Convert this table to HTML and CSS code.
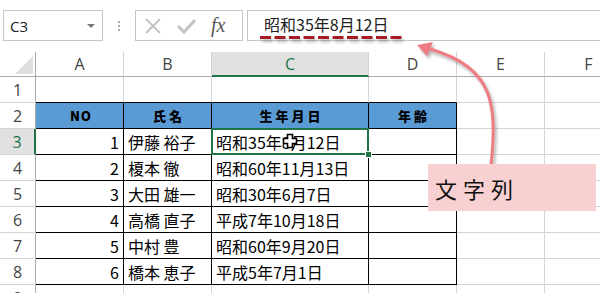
FILE: index.html
```html
<!DOCTYPE html>
<html lang="ja">
<head>
  <meta charset="UTF-8">
  <title>文字列の日付</title>
  <link rel="stylesheet" href="styles.css">
</head>
<body>
  <div class="page">
    <!-- Formula bar -->
    <div class="formula-bar">
      <div class="name-box"><span>C3</span><span class="caret"></span></div>
      <div class="grip"><span></span><span></span><span></span></div>
      <div class="fx-box">
        <svg width="20" height="16" viewBox="0 0 20 16"><path d="M3 1 L17 15 M17 1 L3 15" stroke="#c4c4c4" stroke-width="2" fill="none"/></svg>
        <svg width="20" height="16" viewBox="0 0 20 16"><path d="M2 8 L8 14 L19 2" stroke="#c4c4c4" stroke-width="3" fill="none"/></svg>
        <i class="fx">fx</i>
      </div>
      <div class="formula-input">昭和35年8月12日</div>
    </div>

    <!-- Sheet grid -->
    <div class="sheet">
      <div class="corner"></div>
      <div class="col-head">A</div>
      <div class="col-head">B</div>
      <div class="col-head active">C</div>
      <div class="col-head">D</div>
      <div class="col-head">E</div>
      <div class="col-head">F</div>

      <div class="row-head">1</div>
      <div class="cell above"></div>
      <div class="cell above"></div>
      <div class="cell above"></div>
      <div class="cell above"></div>
      <div class="cell"></div>
      <div class="cell"></div>

      <div class="row-head">2</div>
      <div class="cell th no">NO</div>
      <div class="cell th">氏名</div>
      <div class="cell th">生年月日</div>
      <div class="cell th">年齢</div>
      <div class="cell"></div>
      <div class="cell"></div>

      <div class="row-head active">3</div>
      <div class="cell tb num">1</div>
      <div class="cell tb">伊藤 裕子</div>
      <div class="cell tb sel">昭和35年8月12日
        <svg class="cross" width="16" height="16" viewBox="0 0 16 16"><path d="M5.5 1.5 H10.5 V5.5 H14.5 V10.5 H10.5 V14.5 H5.5 V10.5 H1.5 V5.5 H5.5 Z" fill="#fff" stroke="#000" stroke-width="1.6"/></svg>
      </div>
      <div class="cell tb"></div>
      <div class="cell"></div>
      <div class="cell"></div>

      <div class="row-head">4</div>
      <div class="cell tb num">2</div>
      <div class="cell tb">榎本 徹</div>
      <div class="cell tb">昭和60年11月13日</div>
      <div class="cell tb"></div>
      <div class="cell"></div>
      <div class="cell"></div>

      <div class="row-head">5</div>
      <div class="cell tb num">3</div>
      <div class="cell tb">大田 雄一</div>
      <div class="cell tb">昭和30年6月7日</div>
      <div class="cell tb"></div>
      <div class="cell"></div>
      <div class="cell"></div>

      <div class="row-head">6</div>
      <div class="cell tb num">4</div>
      <div class="cell tb">高橋 直子</div>
      <div class="cell tb">平成7年10月18日</div>
      <div class="cell tb"></div>
      <div class="cell"></div>
      <div class="cell"></div>

      <div class="row-head">7</div>
      <div class="cell tb num">5</div>
      <div class="cell tb">中村 豊</div>
      <div class="cell tb">昭和60年9月20日</div>
      <div class="cell tb"></div>
      <div class="cell"></div>
      <div class="cell"></div>

      <div class="row-head">8</div>
      <div class="cell tb num">6</div>
      <div class="cell tb">橋本 恵子</div>
      <div class="cell tb">平成5年7月1日</div>
      <div class="cell tb"></div>
      <div class="cell"></div>
      <div class="cell"></div>

      <div class="row-head">9</div>
      <div class="cell"></div>
      <div class="cell"></div>
      <div class="cell"></div>
      <div class="cell"></div>
      <div class="cell"></div>
      <div class="cell"></div>
    </div>

    <!-- Annotation: underline + arrow -->
    <svg class="marks" width="600" height="293" viewBox="0 0 600 293">
      <defs>
        <filter id="shade" filterUnits="userSpaceOnUse" x="0" y="0" width="600" height="293">
          <feDropShadow dx="2" dy="3" stdDeviation="1.4" flood-color="#777" flood-opacity="0.55"/>
        </filter>
      </defs>
      <line x1="260" y1="37.5" x2="405" y2="37.5" stroke="#a51d28" stroke-width="3.2" stroke-dasharray="11 3.5" filter="url(#shade)"/>
      <g filter="url(#shade)">
        <path d="M491 166 C497 105 495 68 430 49" stroke="#ef7c82" stroke-width="3" fill="none"/>
        <polygon points="417,45 433,42 427,56" fill="#ef7c82"/>
      </g>
    </svg>
    <div class="callout">文字列</div>
  </div>
</body>
</html>
```

FILE: styles.css
```css
/* Base */
body {
  margin: 0;
  background-color: #fff;
  font-family: "Noto Sans CJK JP", sans-serif;
  color: #000;
  overflow: hidden;
}

.page {
  position: relative;
  width: 600px;
  height: 293px;
  overflow: hidden;
}

/* Formula bar */
.formula-bar {
  display: flex;
  align-items: stretch;
  height: 31px;
  padding: 10px 0 11px 3px;
}

.name-box {
  width: 100px;
  box-sizing: border-box;
  border: 1px solid #c6c6c6;
  display: flex;
  align-items: center;
  justify-content: space-between;
  padding: 0 6px 0 6px;
  font-family: "Open Sans", sans-serif;
  font-size: 15px;
  color: #222;
}

.caret {
  width: 0;
  height: 0;
  border-left: 4px solid transparent;
  border-right: 4px solid transparent;
  border-top: 4px solid #777;
  margin-right: 1px;
}

.grip {
  width: 32px;
  display: flex;
  flex-direction: column;
  align-items: center;
  justify-content: center;
  gap: 2px;
}

.grip span {
  width: 2px;
  height: 2px;
  background-color: #a8a8a8;
}

.fx-box {
  width: 108px;
  box-sizing: border-box;
  border: 1px solid #c6c6c6;
  display: flex;
  align-items: center;
  padding-left: 7px;
  gap: 13px;
}

.fx {
  font-family: "Liberation Serif", serif;
  font-size: 20px;
  color: #555;
  margin-left: 2px;
}

.formula-input {
  flex: 1;
  margin-left: 4px;
  border: 1px solid #c6c6c6;
  border-right: none;
  padding-left: 16px;
  font-size: 16px;
  line-height: 27px;
  color: #222;
}

/* Sheet grid */
.sheet {
  display: grid;
  grid-template-columns: 36px 88px 88px 157px 88px 88px 88px;
  grid-template-rows: 25px repeat(9, 26px);
}

.sheet > div {
  box-sizing: border-box;
  border-right: 1px solid #d4d4d4;
  border-bottom: 1px solid #d4d4d4;
  display: flex;
  align-items: center;
  white-space: nowrap;
}

.corner {
  position: relative;
  border-bottom-color: #ababab !important;
  border-right-color: #ababab !important;
}

.corner::after {
  content: "";
  position: absolute;
  right: 2px;
  bottom: 2px;
  width: 0;
  height: 0;
  border-left: 18px solid transparent;
  border-bottom: 18px solid #dfdfdf;
}

.col-head {
  justify-content: center;
  font-family: "Open Sans", sans-serif;
  font-size: 16px;
  color: #444;
  border-bottom-color: #ababab !important;
}

.col-head.active {
  background-color: #e1e1e1;
  color: #217346;
  border-bottom: 2px solid #217346 !important;
}

.row-head {
  justify-content: center;
  font-family: "Open Sans", sans-serif;
  font-size: 16px;
  color: #444;
  border-right-color: #ababab !important;
}

.row-head.active {
  background-color: #e1e1e1;
  color: #217346;
  border-right: 2px solid #217346 !important;
}

.cell {
  font-size: 16px;
  padding-left: 4px;
}

.cell.above {
  border-bottom-color: #000 !important;
}

.cell.th {
  background-color: #5b9bd5;
  border-right-color: #000 !important;
  border-bottom-color: #000 !important;
  justify-content: center;
  font-size: 13px;
  font-weight: 900;
  letter-spacing: 3px;
  padding-left: 3px;
}

.cell.th.no {
  letter-spacing: 1px;
}

.cell.tb {
  border-right-color: #000 !important;
  border-bottom-color: #000 !important;
}

.cell.num {
  justify-content: flex-end;
  padding: 0 4px 0 0;
}

/* Selected cell */
.cell.sel {
  position: relative;
}

.cell.sel::before {
  content: "";
  position: absolute;
  top: -1px;
  left: -1px;
  right: -1px;
  bottom: -1px;
  border: 2px solid #217346;
}

.cell.sel::after {
  content: "";
  position: absolute;
  right: -4px;
  bottom: -4px;
  width: 5px;
  height: 5px;
  background-color: #217346;
  border: 1px solid #fff;
}

.cross {
  position: absolute;
  left: 70px;
  top: 4px;
}

/* Annotation */
.marks {
  position: absolute;
  top: 0;
  left: 0;
  pointer-events: none;
}

.callout {
  position: absolute;
  left: 428px;
  top: 164px;
  width: 168px;
  height: 47px;
  box-sizing: border-box;
  background-color: #f8d0d2;
  padding-left: 7px;
  display: flex;
  align-items: center;
  font-size: 22px;
  letter-spacing: 6px;
  color: #111;
}
```
